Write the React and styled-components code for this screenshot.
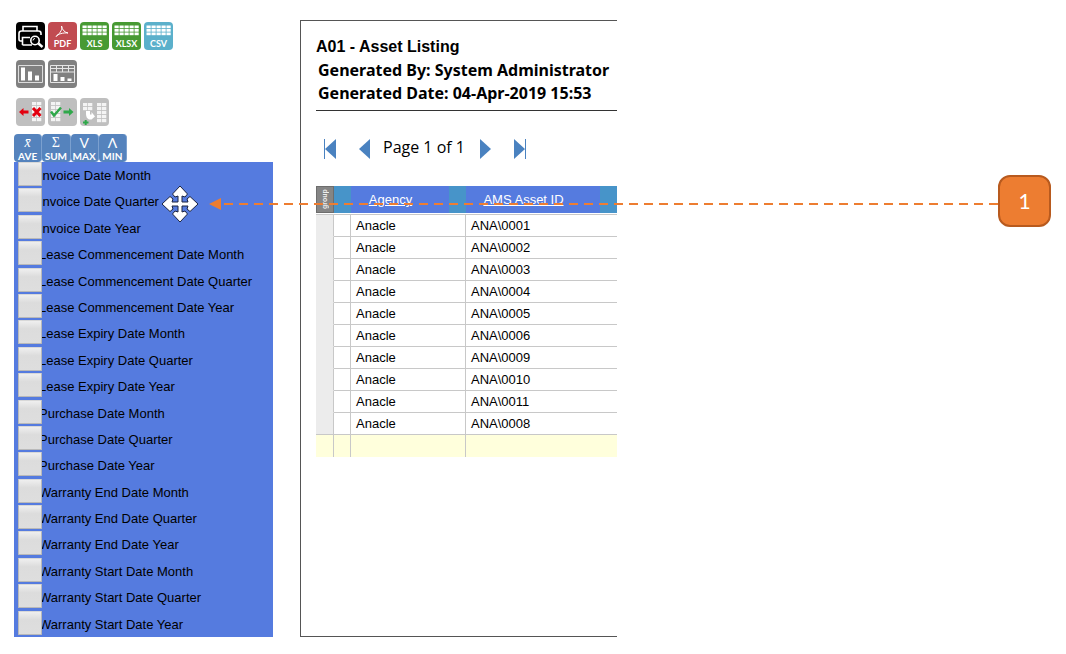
import React from "react";
import styled, { createGlobalStyle } from "styled-components";

const Global = createGlobalStyle`
  *, *::before, *::after { box-sizing: border-box; }
  body { margin: 0; background: #fff; color: #000; font-family: "Liberation Sans", Arial, sans-serif; font-size: 13px; }
`;

const Page = styled.main`
  position: relative;
  display: flex;
  align-items: stretch;
  padding: 20px 14px 17px;
`;

const Sidebar = styled.aside`
  flex: 0 1 259px;
  min-width: 0;
  padding-top: 2px;
`;

const Toolbar = styled.div`
  display: flex;
  gap: 3px;
  padding-left: 2px;
  margin-bottom: 10px;
`;

const Aggregates = styled.div`
  display: flex;
  width: 113px;
  margin-top: -2px;
`;

const fills = {
  black: "#000",
  red: "#c14b51",
  green: "#479a33",
  cyan: "#5bb0cb",
  grey: "#808080",
  silver: "#bfbfbf",
  blue: "#5583bd",
};

const IconButton = styled.button`
  width: 29px;
  height: 28px;
  padding: 0;
  border: 0;
  border-radius: 4px;
  background: ${(p) => fills[p.$tone]};
  cursor: pointer;
  svg { display: block; width: 100%; height: 100%; }
`;

const AggregateButton = styled(IconButton)`
  flex: 1;
  border-right: 1px solid #7ba0cf;
  display: flex;
  flex-direction: column;
  align-items: center;
  justify-content: flex-end;
  color: #fff;
`;

const Symbol = styled.span`
  height: 15px;
  font: ${(p) => (p.$italic ? "italic" : "normal")} 14px/16px ${(p) => (p.$sans ? "Lato, sans-serif" : '"Liberation Serif", serif')};
`;

const Caption = styled.span`
  font: 700 10px/12px Lato, sans-serif;
`;

const FieldList = styled.ul`
  display: grid;
  grid-auto-rows: 1fr;
  min-height: 475px;
  margin: 0;
  padding: 0 0 0 4px;
  list-style: none;
  background: #557bdf;
`;

const Field = styled.li`
  display: flex;
  align-items: flex-start;
`;

const FieldBox = styled.input`
  appearance: none;
  position: relative;
  z-index: 1;
  flex: none;
  width: 24px;
  height: 24px;
  margin: 0;
  border: 1px solid #b9b9b9;
  border-top-color: #d8d8d8;
  border-radius: 1px;
  background: linear-gradient(#efefef, #dcdcdc 35%, #dedede);
`;

const FieldLabel = styled.label`
  margin: 2px 0 0 -3px;
  line-height: 24px;
  white-space: nowrap;
`;

const Report = styled.section`
  flex: 0 1 317px;
  min-width: 0;
  margin-left: 27px;
  padding: 13px 0 0 15px;
  border: 1px solid #555;
  border-right: 0;
`;

const ReportHead = styled.header`
  padding-bottom: 5px;
  border-bottom: 1px solid #333;
`;

const Title = styled.h1`
  margin: 0;
  font: 700 16px/25px "Liberation Sans", Arial, sans-serif;
`;

const Meta = styled.p`
  margin: 0;
  padding-left: 2px;
  font: 700 16px/23px "Noto Sans", "Open Sans", sans-serif;
  white-space: nowrap;
`;

const Pager = styled.nav`
  display: flex;
  align-items: center;
  gap: 12px;
  height: 24px;
  margin: 26px 0 25px;
  padding-left: 8px;
`;

const PageStatus = styled.span`
  min-width: 84px;
  padding-bottom: 4px;
  font: 16px/20px "Open Sans", sans-serif;
`;

const PageButton = styled.button`
  width: 13px;
  height: 20px;
  padding: 0;
  border: 0;
  background: none;
  margin-right: ${(p) => (p.$spaced ? "9px" : "0")};
  svg { display: block; fill: #4a82c0; }
`;

const DataTable = styled.table`
  width: 100%;
  table-layout: fixed;
  border-collapse: separate;
  border-spacing: 0;
`;

const Col = styled.col`
  width: ${(p) => p.$w};
`;

const HeadCell = styled.th`
  height: 29px;
  padding: 0 0 1px;
  border-bottom: 1px solid #c8c8c8;
  background: #4794c9;
  background-clip: content-box;
  font-weight: 400;
  text-align: left;
`;

const HeadLabel = styled.div`
  display: flex;
  align-items: center;
  justify-content: center;
  height: 27px;
  margin-right: 17px;
  padding-right: 19px;
  background: #557bdf;
`;

const SortLink = styled.a`
  color: #fff;
  font-size: 13px;
  text-decoration: underline;
  white-space: nowrap;
`;

const GroupTag = styled.div`
  height: 27px;
  border: 1px solid #6d6d6d;
  background: #858585;
`;

const GroupText = styled.span`
  display: block;
  width: 15px;
  height: 25px;
  color: #eee;
  font: 700 7px/15px "Liberation Sans", sans-serif;
  writing-mode: vertical-rl;
  transform: rotate(180deg);
  text-align: center;
`;

const Cell = styled.td`
  height: 22px;
  padding: 0 0 0 5px;
  border-right: 1px solid #c8c8c8;
  border-bottom: 1px solid #c8c8c8;
  line-height: 20px;
  &:last-child { border-right: 0; }
`;

const GroupCell = styled(Cell)`
  background: #ececec;
  tr:not(:last-child) > & { border-bottom-color: #ececec; }
`;

const FootCell = styled(Cell)`
  background: #ffffdc;
  border-bottom: 0;
`;

const Callout = styled.div`
  position: absolute;
  top: 175px;
  left: 209px;
  right: 15px;
  display: flex;
  align-items: center;
  pointer-events: none;
`;

const ArrowHead = styled.svg`
  flex: none;
  width: 12px;
  height: 12px;
  margin-top: 6px;
`;

const Dashes = styled.div`
  flex: 1;
  height: 2px;
  margin-top: 6px;
  background: repeating-linear-gradient(to left, #ed7d31 0 9px, transparent 9px 15px);
`;

const Badge = styled.span`
  display: flex;
  align-items: center;
  justify-content: center;
  width: 53px;
  height: 52px;
  border: 2px solid #b85a1e;
  border-radius: 12px;
  background: #ed7d31;
  color: #fff;
  font: 21px/28px Lato, sans-serif;
`;

const MoveCursor = styled.svg`
  position: absolute;
  top: 185px;
  left: 161px;
  width: 38px;
  height: 38px;
`;

const label = { fill: "#fff", fontFamily: "Lato, sans-serif", fontWeight: 700, fontSize: 9, textAnchor: "middle" };

const PrintIcon = () => (
  <svg viewBox="0 0 29 28" fill="none" stroke="#fff" strokeWidth="1.6">
    <path d="M7 9V4.500h14V9M6 19H4.500Q3 19 3 17V11.500Q3 9 5.500 9h17Q25 9 25 11.500V13M6.500 23V15.500H14M6.500 23H16" />
    <circle cx="19" cy="18.500" r="4.200" />
    <path d="M17 18.500a2 2 0 0 1 2-2" strokeWidth="1" />
    <path d="m22.500 21.500 4 3.500" strokeWidth="2.400" />
  </svg>
);

const PdfIcon = () => (
  <svg viewBox="0 0 29 28">
    <path d="M13.500 4c1 3-.5 6.500-5.500 10.500 2-2.500 7-4 12-3.500-3-.5-6-3-6.500-7Z" fill="none" stroke="#fff" strokeWidth="1" />
    <text x="14.500" y="24.500" {...label}>PDF</text>
  </svg>
);

const SheetIcon = ({ text }) => (
  <svg viewBox="0 0 29 28">
    {[3.5, 7, 10.5].map((y) =>
      [2.5, 7.5, 12.5, 17.5, 22.5].map((x) => <rect key={`${x}-${y}`} x={x} y={y} width="4.200" height="2.700" fill="#fff" />)
    )}
    <text x="14.500" y="24.500" {...label}>{text}</text>
  </svg>
);

const ChartIcon = () => (
  <svg viewBox="0 0 29 28">
    <path d="M2.500 5.500h24v17h-24z" fill="none" stroke="#ddd" />
    <path d="M5 7.500h4v13H5zM12 11.500h4v9h-4zM19 15.500h4v5h-4z" fill="#fff" />
  </svg>
);

const TableChartIcon = () => (
  <svg viewBox="0 0 29 28">
    <path d="M2.500 5.500h24v17h-24zM2.500 8.500h24M2.500 12h24M8.500 5v7M14.500 5v7M20.500 5v7" fill="none" stroke="#e6e6e6" />
    <path d="M5.500 14h4v7h-4zM12.500 17h4v4h-4zM19.500 18.500h4V21h-4z" fill="#fff" />
  </svg>
);

const Grid = ({ x, y, cols, rows }) =>
  Array.from({ length: cols * rows }, (_, i) => (
    <rect key={i} x={x + (i % cols) * 5} y={y + Math.floor(i / cols) * 4} width="4.300" height="3.200" fill="#f4f4f4" />
  ));

const RemoveIcon = () => (
  <svg viewBox="0 0 29 28">
    <Grid x={16} y={4} cols={2} rows={5} />
    <path d="M3 14l4.500-4v2.500h5v3h-5V18z" fill="#e3000f" />
    <path d="m17 10 7.500 8m0-8L17 18" stroke="#e3000f" strokeWidth="3" />
  </svg>
);

const AddIcon = () => (
  <svg viewBox="0 0 29 28">
    <Grid x={3} y={4} cols={2} rows={5} />
    <path d="m3 13.500 3 4 7-8" fill="none" stroke="#2fa84a" strokeWidth="2.500" />
    <path d="M25.500 14 21 10v2.500h-5.500v3H21V18z" fill="#2fa84a" />
  </svg>
);

const InsertIcon = () => (
  <svg viewBox="0 0 29 28">
    <Grid x={3} y={5} cols={2} rows={2} />
    <Grid x={17} y={5} cols={2} rows={5} />
    <path d="M6 13h4v3.500h1.500V14l3.500 4.500-3.500 3H9Q6 20 6 16z" fill="#fff" />
    <path d="M3 24.500h5.500M5.700 22v5" stroke="#2fa84a" strokeWidth="2" />
  </svg>
);

const toolbars = [
  [
    ["Print preview", "black", <PrintIcon />],
    ["Export PDF", "red", <PdfIcon />],
    ["Export XLS", "green", <SheetIcon text="XLS" />],
    ["Export XLSX", "green", <SheetIcon text="XLSX" />],
    ["Export CSV", "cyan", <SheetIcon text="CSV" />],
  ],
  [
    ["Chart", "grey", <ChartIcon />],
    ["Table and chart", "grey", <TableChartIcon />],
  ],
  [
    ["Remove column", "silver", <RemoveIcon />],
    ["Add column", "silver", <AddIcon />],
    ["Insert column", "silver", <InsertIcon />],
  ],
];

const aggregates = [
  { symbol: "x̄", name: "AVE", italic: true },
  { symbol: "Σ", name: "SUM" },
  { symbol: "V", name: "MAX", sans: true },
  { symbol: "Λ", name: "MIN", sans: true },
];

const fields = ["Invoice Date", "Lease Commencement Date", "Lease Expiry Date", "Purchase Date", "Warranty End Date", "Warranty Start Date"]
  .flatMap((name) => ["Month", "Quarter", "Year"].map((part) => `${name} ${part}`));

const assets = ["0001", "0002", "0003", "0004", "0005", "0006", "0009", "0010", "0011", "0008"];

const pageIcons = {
  first: "M0 0h1v20H0zM12 0v20L1 10z",
  prev: "M12 0v20L1 10z",
  next: "M1 0v20l11-10z",
  last: "M1 0v20l11-10zM12 0h1v20h-1z",
};

const PageNav = ({ kind, title, spaced }) => (
  <PageButton aria-label={title} $spaced={spaced}>
    <svg width="13" height="20" viewBox="0 0 13 20"><path d={pageIcons[kind]} /></svg>
  </PageButton>
);

export default function App() {
  return (
    <>
      <Global />
      <Page>
        <Sidebar>
          {toolbars.map((items, i) => (
            <Toolbar key={i}>
              {items.map(([title, tone, icon]) => (
                <IconButton key={title} aria-label={title} $tone={tone}>{icon}</IconButton>
              ))}
            </Toolbar>
          ))}
          <Aggregates>
            {aggregates.map(({ symbol, name, italic, sans }) => (
              <AggregateButton key={name} $tone="blue">
                <Symbol $italic={italic} $sans={sans}>{symbol}</Symbol>
                <Caption>{name}</Caption>
              </AggregateButton>
            ))}
          </Aggregates>
          <FieldList>
            {fields.map((name, i) => (
              <Field key={name}>
                <FieldBox type="checkbox" id={`field-${i}`} />
                <FieldLabel htmlFor={`field-${i}`}>{name}</FieldLabel>
              </Field>
            ))}
          </FieldList>
        </Sidebar>

        <Report>
          <ReportHead>
            <Title>A01 - Asset Listing</Title>
            <Meta>Generated By: System Administrator</Meta>
            <Meta>Generated Date: 04-Apr-2019 15:53</Meta>
          </ReportHead>
          <Pager>
            <PageNav kind="first" title="First page" spaced />
            <PageNav kind="prev" title="Previous page" />
            <PageStatus>Page 1 of 1</PageStatus>
            <PageNav kind="next" title="Next page" spaced />
            <PageNav kind="last" title="Last page" />
          </Pager>
          <DataTable>
            <colgroup>
              <Col $w="18px" />
              <Col $w="17px" />
              <Col $w="115px" />
              <Col $w="auto" />
            </colgroup>
            <thead>
              <tr>
                <HeadCell><GroupTag><GroupText>group</GroupText></GroupTag></HeadCell>
                <HeadCell />
                <HeadCell><HeadLabel><SortLink href="#agency">Agency</SortLink></HeadLabel></HeadCell>
                <HeadCell><HeadLabel><SortLink href="#asset">AMS Asset ID</SortLink></HeadLabel></HeadCell>
              </tr>
            </thead>
            <tbody>
              {assets.map((id) => (
                <tr key={id}>
                  <GroupCell />
                  <Cell />
                  <Cell>Anacle</Cell>
                  <Cell>{`ANA\\${id}`}</Cell>
                </tr>
              ))}
            </tbody>
            <tfoot>
              <tr><FootCell /><FootCell /><FootCell /><FootCell /></tr>
            </tfoot>
          </DataTable>
        </Report>

        <MoveCursor viewBox="0 0 38 38">
          <path
            d="M19 1l7.500 8-2.500 3-3-1v6h6l-1-3 3-2.500L37 19l-8 7.500-3-2.500 1-3h-6v6l3-1 2.500 3L19 37l-7.500-8 2.500-3 3 1v-6h-6l1 3-3 2.500L1 19l8-7.500 3 2.500-1 3h6v-6l-3 1-2.500-3z"
            fill="#fff" stroke="#1c2440" strokeWidth="1" strokeLinejoin="round"
          />
        </MoveCursor>
        <Callout>
          <ArrowHead viewBox="0 0 12 12"><path d="M0 6 12 0v12z" fill="#ed7d31" /></ArrowHead>
          <Dashes />
          <Badge>1</Badge>
        </Callout>
      </Page>
    </>
  );
}
